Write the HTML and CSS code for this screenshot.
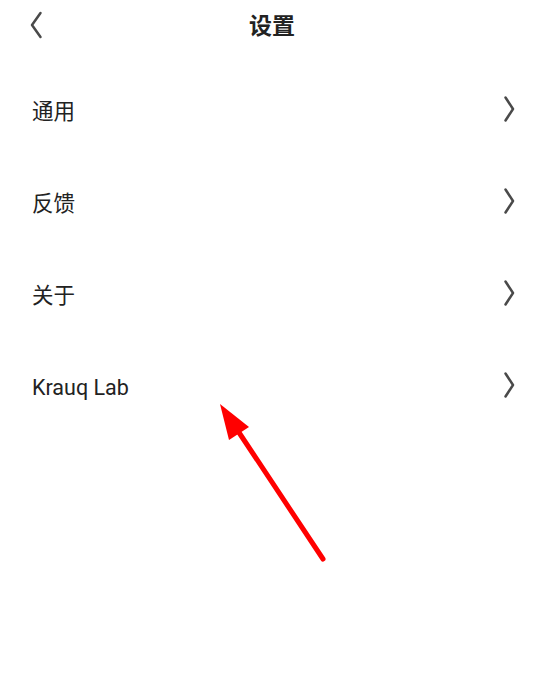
FILE: index.html
```html
<!DOCTYPE html>
<html lang="zh">
<head>
<meta charset="utf-8">
<link rel="stylesheet" href="styles.css">
</head>
<body>
<div class="page">
  <header class="topbar">
    <span class="back">
      <svg width="14" height="28" viewBox="0 0 14 28"><path d="M11.5 2 L3 14 L11.5 26" fill="none" stroke="#4a4a4a" stroke-width="2.5" stroke-linecap="round" stroke-linejoin="round"/></svg>
    </span>
    <h1 class="title">设置</h1>
  </header>
  <ul class="list">
    <li class="row"><span class="label">通用</span><svg class="chev" width="14" height="28" viewBox="0 0 14 28"><path d="M4.5 2.5 L12 14 L4.5 25.5" fill="none" stroke="#4a4a4a" stroke-width="2.5" stroke-linecap="round" stroke-linejoin="round"/></svg></li>
    <li class="row"><span class="label">反馈</span><svg class="chev" width="14" height="28" viewBox="0 0 14 28"><path d="M4.5 2.5 L12 14 L4.5 25.5" fill="none" stroke="#4a4a4a" stroke-width="2.5" stroke-linecap="round" stroke-linejoin="round"/></svg></li>
    <li class="row"><span class="label">关于</span><svg class="chev" width="14" height="28" viewBox="0 0 14 28"><path d="M4.5 2.5 L12 14 L4.5 25.5" fill="none" stroke="#4a4a4a" stroke-width="2.5" stroke-linecap="round" stroke-linejoin="round"/></svg></li>
    <li class="row"><span class="label latin">Krauq Lab</span><svg class="chev" width="14" height="28" viewBox="0 0 14 28"><path d="M4.5 2.5 L12 14 L4.5 25.5" fill="none" stroke="#4a4a4a" stroke-width="2.5" stroke-linecap="round" stroke-linejoin="round"/></svg></li>
  </ul>
  <svg class="annot" width="544" height="674" viewBox="0 0 544 674">
    <line x1="323" y1="559" x2="236" y2="428" stroke="#ff0000" stroke-width="5" stroke-linecap="round"/>
    <polygon points="220,404 249,427 229,440" fill="#ff0000"/>
  </svg>
</div>
</body>
</html>
```
FILE: styles.css
```css
html, body {
  margin: 0;
  padding: 0;
  background: #fff;
}
.page {
  position: relative;
  width: 544px;
  height: 674px;
  overflow: hidden;
  font-family: Roboto, "Noto Sans CJK SC", sans-serif;
  color: #222;
}
.topbar {
  display: flex;
  align-items: center;
  justify-content: center;
  height: 48px;
  position: relative;
}
.back {
  position: absolute;
  left: 29px;
  top: 11px;
  display: flex;
}
.title {
  margin: 0;
  font-size: 23px;
  font-weight: 700;
  color: #222;
}
.list {
  list-style: none;
  margin: 0;
  padding: 15px 0 0 0;
}
.row {
  display: flex;
  align-items: center;
  justify-content: space-between;
  height: 92px;
  padding: 0 29px 0 32px;
}
.label {
  font-size: 21.5px;
  color: #222;
}
.label.latin {
  padding-top: 5px;
}
.chev {
  display: block;
}
.annot {
  position: absolute;
  left: 0;
  top: 0;
}
```
